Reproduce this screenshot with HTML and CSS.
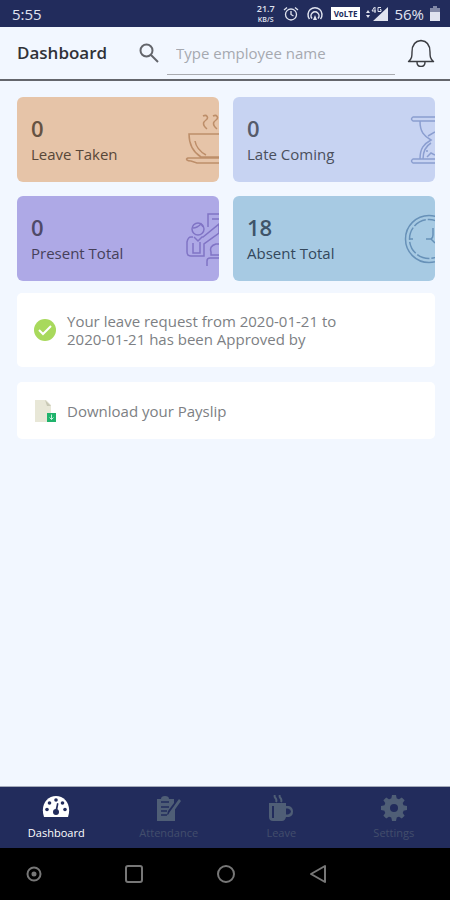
FILE: index.html
```html
<!DOCTYPE html>
<html lang="en">
<head>
<meta charset="utf-8">
<meta name="viewport" content="width=device-width, initial-scale=1">
<title>Dashboard</title>
<link rel="stylesheet" href="styles.css">
</head>
<body>
<div class="status">
  <span class="time">5:55</span>
  <div class="indicators">
    <span class="speed"><span>21.7</span><span class="unit">KB/S</span></span>
    <svg width="16" height="16" viewBox="0 0 16 16" fill="none" stroke="currentColor" stroke-width="1.3"><circle cx="8" cy="8.500" r="5.500"/><path d="M8 5v3.500l2.500 1.500M1 4l3-2.500M15 4l-3-2.500"/></svg>
    <svg width="16" height="16" viewBox="0 0 16 16" fill="none" stroke="currentColor" stroke-width="1.500"><path d="M2.500 13a7 7 0 1 1 11 0M5 12.500a4 4 0 1 1 6 0"/><path d="M8 9l-2 5h4z" fill="currentColor" stroke="none"/></svg>
    <span class="volte">VoLTE</span>
    <svg class="signal" width="22" height="16" viewBox="0 0 22 16" fill="currentColor"><path d="M22 1v14H7zM0 7l2-3 2 3zM0 9h4l-2 3z"/><path d="M8.500 1L6 5H10M9 1v6M15 1.500h-3v4h3V3.500h-1" fill="none" stroke="currentColor"/></svg>
    <span class="percent">56%</span>
    <svg width="10" height="15" viewBox="0 0 10 15" fill="currentColor"><path d="M3 0h4v2h3v5H0V2h3z" opacity=".5"/><path d="M0 6h10v9H0z"/></svg>
  </div>
</div>
<header class="header">
  <h1>Dashboard</h1>
  <label class="search-icon" for="search" aria-label="Search employees"><svg width="20" height="20" viewBox="0 0 20 20" fill="none" stroke="currentColor" stroke-width="2"><circle cx="7.500" cy="7.500" r="6"/><path d="M12 12l7 7"/></svg></label>
  <input id="search" class="search" type="text" placeholder="Type employee name">
  <button class="bell" type="button" aria-label="Notifications"><svg width="28" height="28" viewBox="0 0 28 28" fill="none" stroke="currentColor" stroke-width="1.400" stroke-linejoin="round"><path d="M1.500 22.500C5 20 5 17 5 13C5 6 8 2 14 1.500C20 2 23 6 23 13C23 17 23 20 26.500 22.500ZM10 23c0 6 8 6 8 0"/></svg></button>
</header>
<main class="content">
  <section class="cards">
    <article class="card leave"><div><strong>0</strong><span>Leave Taken</span></div>
      <svg width="34" height="60" viewBox="0 0 34 60"><path d="M34 27H4c0 11 4 18 12 23h18M10 34c1 6 4 10 11 14M34 51H3c-3 1-1 3 3 3l6 2h22M18 9c4-2 6 2 3 4s-4 5 1 9M28 9c4-2 6 2 3 4s-4 5 1 9"/></svg></article>
    <article class="card late"><div><strong>0</strong><span>Late Coming</span></div>
      <svg width="34" height="60" viewBox="0 0 34 60"><path d="M34 10H12q-3 2 0 4h22M34 52H12q-3 2 0 4h22M19 14c0 11 4 15 11 19-7 4-11 8-11 19M22 52c0-8 3-13 8-16M34 25l-7 4M26 50l4-4 4 2M25 44h2"/></svg></article>
    <article class="card present"><div><strong>0</strong><span>Present Total</span></div>
      <svg width="34" height="60" viewBox="0 0 34 60"><circle cx="13" cy="23" r="6"/><path d="M8 22c4 0 6-2 8-4 1 2 2 3 3 3M8 31H6q-3 0-4 5v10q0 4 4 4h13V38l15-11v-9L18 31h-1l-4 4-4-4M8 37v10h7V36M23 21V8h11M27 13h7M34 38h-3q-7 2-5 8v3h8M22 60v-5q0-3 3-3h9"/></svg></article>
    <article class="card absent"><div><strong>18</strong><span>Absent Total</span></div>
      <svg width="34" height="60" viewBox="0 0 34 60"><circle cx="28" cy="33" r="23.500"/><circle cx="28" cy="33" r="19.500" stroke-dasharray="13 2"/><path d="M8 33h4M25 33h5q2-1 2-4v-7M30 33l4 4"/></svg></article>
  </section>
  <section class="notice approved">
    <svg width="24" height="24" viewBox="0 0 24 24"><circle cx="12" cy="12" r="11" fill="#a8d95c"/><path d="M6 12l4 4 8-8" fill="none" stroke="#fff" stroke-width="2"/></svg>
    <p>Your leave request from 2020-01-21 to 2020-01-21 has been Approved by</p>
  </section>
  <a class="notice payslip" href="#payslip">
    <svg width="24" height="24" viewBox="0 0 24 24"><path d="M2 1h11l5 5v17H2z" fill="#e8e7d7"/><path d="M12 1l6 6h-4z" fill="#c8c8b5"/><path d="M14 14h9v9h-9z" fill="#20b36c"/><path d="M18.500 15.500v5M16.500 18.500l2 2 2-2" fill="none" stroke="#c5f2dc"/></svg>
    <p>Download your Payslip</p>
  </a>
</main>
<nav class="tabs" aria-label="Main">
  <a class="active" href="#dashboard"><svg width="28" height="26" viewBox="0 0 28 26"><path d="M2 22C-2 10 5 1 14 1S30 10 26 22z" fill="currentColor"/><g fill="#222c5c"><circle cx="14" cy="5" r="1.800"/><circle cx="7.500" cy="8" r="1.800"/><circle cx="20.500" cy="8" r="1.800"/><circle cx="5" cy="14.500" r="1.800"/><circle cx="23" cy="14.500" r="1.800"/><circle cx="14" cy="17" r="3"/><path d="M15 8l1.500.5L15 17h-2z"/></g></svg>Dashboard</a>
  <a href="#attendance"><svg width="28" height="26" viewBox="0 0 28 26"><path d="M2 4h4q0-3 4-3t4 3h5v4l-6 8-1 4 4-2 4-5v13H2zM24 4l2 2-10 14-3 2 1-4z" fill="currentColor"/><path d="M6 7h8M6 12h8M6 16h6M6 20h6" stroke="#222c5c" stroke-width="1.300"/></svg>Attendance</a>
  <a href="#leave"><svg width="28" height="26" viewBox="0 0 28 26"><path d="M2 8h17v3h3q4 1 4 5.500T22 22h-3q-1 4-4 4H6q-4 0-4-4zM19 13.500v6h2q3-1 3-3t-3-3z" fill="currentColor" fill-rule="evenodd"/><path d="M8 0c-2 3 3 3 1 7M13 0c-2 3 3 3 1 7" fill="none" stroke="currentColor" stroke-width="2"/><path d="M6 11v12" stroke="#222c5c" stroke-width="2"/></svg>Leave</a>
  <a href="#settings"><svg width="28" height="26" viewBox="0 0 28 26"><g fill="currentColor"><path id="tooth" d="M11 5l1-5h4l1 5z"/><use href="#tooth" transform="rotate(45 14 13)"/><use href="#tooth" transform="rotate(90 14 13)"/><use href="#tooth" transform="rotate(135 14 13)"/><use href="#tooth" transform="rotate(180 14 13)"/><use href="#tooth" transform="rotate(225 14 13)"/><use href="#tooth" transform="rotate(270 14 13)"/><use href="#tooth" transform="rotate(315 14 13)"/></g><circle cx="14" cy="13" r="7" fill="none" stroke="currentColor" stroke-width="6"/></svg>Settings</a>
</nav>
<div class="system">
  <button class="assistant" type="button" aria-label="Assistant"><svg width="20" height="20" viewBox="0 0 20 20"><circle cx="10" cy="10" r="6.500"/><circle cx="10" cy="10" r="1.500" fill="currentColor"/></svg></button>
  <button type="button" aria-label="Recent apps"><svg width="20" height="20" viewBox="0 0 20 20"><rect x="2" y="2" width="16" height="16" rx="2"/></svg></button>
  <button type="button" aria-label="Home"><svg width="20" height="20" viewBox="0 0 20 20"><circle cx="10" cy="10" r="8"/></svg></button>
  <button type="button" aria-label="Back"><svg width="20" height="20" viewBox="0 0 20 20"><path d="M17 2v16L3 10z" stroke-linejoin="round"/></svg></button>
</div>
</body>
</html>
```
FILE: styles.css
```css
* { box-sizing: border-box; }
body {
  margin: 0;
  min-height: 100vh;
  display: flex;
  flex-direction: column;
  background: #f2f7ff;
  color: #303238;
  font-family: "Open Sans", "Noto Sans", sans-serif;
  font-size: 14px;
}
svg { display: block; flex: none; }
a { color: inherit; text-decoration: none; }
button { padding: 0; border: 0; background: none; color: inherit; }
p, h1 { margin: 0; }

.status {
  height: 27px;
  padding: 0 10px 0 12px;
  display: flex;
  align-items: center;
  justify-content: space-between;
  background: #222c5c;
  color: #e0e3ef;
}
.time { font-size: 15px; }
.indicators { display: flex; align-items: center; gap: 8px; }
.speed { display: flex; flex-direction: column; align-items: center; font-size: 9px; font-weight: 600; line-height: 12px; }
.unit { font-size: 7px; line-height: 10px; }
.volte { padding: 0 3px; background: #fff; color: #222c5c; font-size: 8px; font-weight: 700; line-height: 13px; }
.percent { font-size: 15px; }
.indicators > :nth-last-child(-n+3) { margin-left: -2px; }

.header {
  height: 54px;
  padding: 0 15px 0 17px;
  display: flex;
  align-items: center;
  border-bottom: 2px solid #64666c;
}
h1 { font-size: 17px; font-weight: 600; line-height: 24px; }
.search-icon { margin-left: auto; padding-right: 8px; color: #63656b; }
.search {
  width: 228px;
  height: 43px;
  align-self: flex-end;
  margin-bottom: 4px;
  padding: 0 9px;
  border: 0;
  border-bottom: 1px solid #a9abb0;
  border-radius: 0;
  outline: 0;
  background: none;
  color: #303238;
  font: inherit;
  font-size: 15px;
}
.search::placeholder { color: #a6a9b0; opacity: 1; }
.bell { margin-left: 12px; color: #3b3d42; }

.content { flex: 1; padding: 16px 15px 16px 17px; }
.cards { display: grid; grid-template-columns: 1fr 1fr; gap: 14px; }
.card {
  height: 85px;
  padding-left: 14px;
  display: flex;
  align-items: center;
  justify-content: space-between;
  border-radius: 6px;
  overflow: hidden;
}
.card div { display: flex; flex-direction: column; }
.card strong { font-size: 22px; font-weight: 600; line-height: 28px; opacity: 0.9; }
.card span { font-size: 15px; line-height: 24px; }
.card svg { align-self: flex-start; margin-top: 10px; fill: none; stroke: currentColor; stroke-width: 1.5; }
.leave { background: #e6c4a8; color: #584738; }
.late { background: #c7d3f2; color: #4a4f5c; }
.present { background: #aea9e6; color: #45405a; }
.absent { background: #a7cae3; color: #34485c; }
.leave svg { color: #bd8e69; }
.late svg { color: #8b9ed0; }
.present svg { color: #8074c5; }
.absent svg { color: #6791b8; }

.notice {
  display: flex;
  align-items: center;
  gap: 10px;
  padding: 0 90px 0 16px;
  border-radius: 5px;
  background: #fff;
  color: #7d7f84;
  font-size: 15px;
  line-height: 18px;
}
.approved { min-height: 74px; margin-top: 12px; }
.payslip { min-height: 57px; margin-top: 15px; }

.tabs {
  height: 62px;
  display: grid;
  grid-template-columns: repeat(4, 1fr);
  border-top: 1px solid #a5abbb;
  background: #222c5c;
  color: #424e6c;
}
.tabs a {
  padding-top: 8px;
  display: flex;
  flex-direction: column;
  align-items: center;
  gap: 4px;
  font-size: 11px;
  line-height: 16px;
}
.tabs svg { color: #4f5e76; }
.tabs .active, .tabs .active svg { color: #fff; }

.system {
  height: 52px;
  padding-left: 24px;
  display: flex;
  align-items: center;
  gap: 72px;
  background: #000;
  color: #777;
}
.assistant { margin-right: 8px; }
.system svg { fill: none; stroke: currentColor; stroke-width: 2; }
```
